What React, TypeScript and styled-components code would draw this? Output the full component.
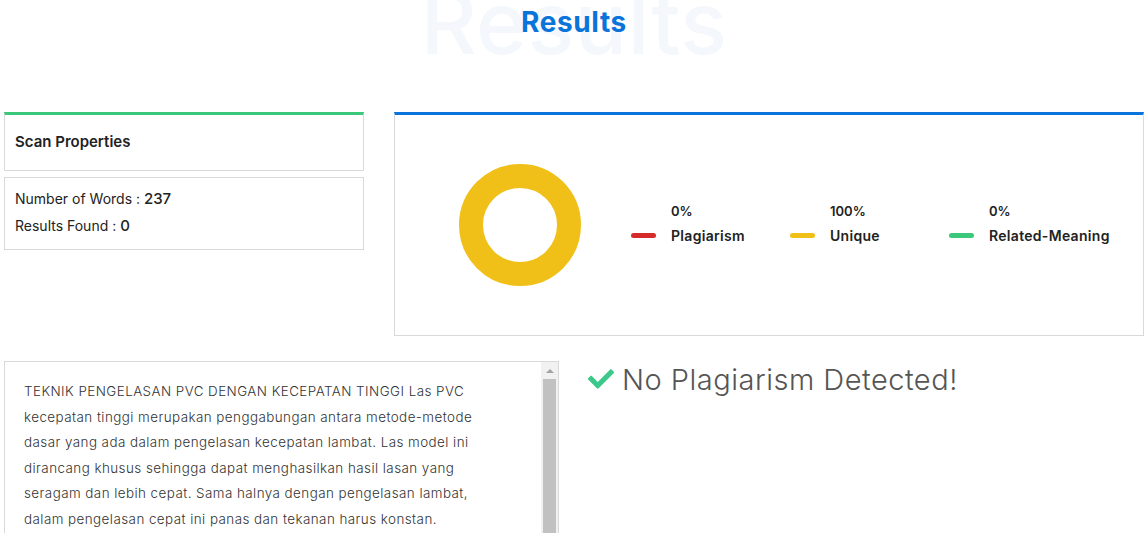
import styled, { createGlobalStyle } from "styled-components";
import { FaCheck } from "react-icons/fa";

const GlobalStyle = createGlobalStyle`
  html, body {
    margin: 0;
    padding: 0;
    background: #fff;
    font-family: Inter, "Open Sans", "Liberation Sans", sans-serif;
    color: #212529;
  }
`;

const Page = styled.div`
  padding: 0 4px;
  width: 1148px;
  box-sizing: border-box;
  overflow: hidden;
  height: 533px;
`;

const TitleWrap = styled.div`
  position: relative;
  height: 112px;
  text-align: center;
`;

const GhostTitle = styled.div`
  position: absolute;
  left: 0;
  right: 0;
  top: -29px;
  font-size: 87px;
  font-weight: 500;
  color: #f4f8fd;
  letter-spacing: 0.4px;
  line-height: 1.2;
  user-select: none;
`;

const Title = styled.h2`
  position: relative;
  margin: 0;
  padding-top: 4px;
  font-size: 28px;
  font-weight: 700;
  letter-spacing: 0.6px;
  color: #0a74da;
  line-height: 36px;
`;

const TopRow = styled.div`
  display: grid;
  grid-template-columns: 360px 750px;
  column-gap: 30px;
  align-items: start;
`;

const Panel = styled.div<{ accent?: string }>`
  border: 1px solid #d9d9d9;
  border-top: ${(p) => (p.accent ? `3px solid ${p.accent}` : "1px solid #d9d9d9")};
  background: #fff;
  box-sizing: border-box;
`;

const PropsHeader = styled(Panel)`
  height: 59px;
  display: flex;
  align-items: center;
  padding: 0 10px 2px;
  font-size: 15px;
  font-weight: 600;
  color: #222;
`;

const PropsBody = styled(Panel)`
  margin-top: 6px;
  padding: 10px 10px 13px;
  display: flex;
  flex-direction: column;
  gap: 6px;
`;

const PropLine = styled.div`
  font-size: 14px;
  color: #222;
  line-height: 21px;
`;

const PropValue = styled.span`
  font-size: 15px;
  font-weight: 500;
`;

const ChartPanel = styled(Panel)`
  height: 224px;
  display: flex;
  align-items: center;
  padding: 0 0 0 63px;
`;

const Legend = styled.div`
  display: flex;
  margin-left: 49px;
  margin-top: -4px;
`;

const LegendItem = styled.div`
  width: 159px;
  display: grid;
  grid-template-columns: 40px auto;
  row-gap: 8px;
  align-items: center;
`;

const Swatch = styled.span<{ color: string }>`
  grid-column: 1;
  grid-row: 2;
  width: 25px;
  height: 5px;
  border-radius: 3px;
  background: ${(p) => p.color};
`;

const Pct = styled.div`
  grid-column: 2;
  grid-row: 1;
  font-size: 13px;
  font-weight: 600;
  color: #222;
`;

const Label = styled.div`
  grid-column: 2;
  grid-row: 2;
  font-size: 14px;
  font-weight: 600;
  letter-spacing: 0.3px;
  color: #222;
  white-space: nowrap;
`;

const BottomRow = styled.div`
  display: flex;
  margin-top: 25px;
  gap: 29px;
`;

const TextBox = styled.div`
  width: 555px;
  height: 240px;
  box-sizing: border-box;
  border: 1px solid #d9d9d9;
  display: flex;
  overflow: hidden;
`;

const TextBody = styled.div`
  flex: 1;
  padding: 17px 10px 0 19px;
  font-size: 13.4px;
  letter-spacing: 0.45px;
  line-height: 25.6px;
  color: #333;
  font-weight: 300;
  white-space: nowrap;
  overflow: hidden;
`;

const ScrollTrack = styled.div`
  width: 17px;
  background: #f1f1f1;
  display: flex;
  flex-direction: column;
  align-items: center;
`;

const ScrollArrow = styled.div`
  height: 17px;
  display: flex;
  align-items: center;
  justify-content: center;

  &::before {
    content: "";
    border-left: 4px solid transparent;
    border-right: 4px solid transparent;
    border-bottom: 4px solid #a3a3a3;
  }
`;

const ScrollThumb = styled.div`
  width: 13px;
  flex: 1;
  background: #c1c1c1;
`;

const Verdict = styled.div`
  display: flex;
  align-items: center;
  gap: 8px;
  font-size: 29px;
  font-weight: 300;
  letter-spacing: 0.5px;
  color: #555;
  height: 36px;
  white-space: nowrap;

  svg {
    color: #3cc88a;
    font-size: 26px;
  }
`;

const Donut = () => (
  <svg width="124" height="124" viewBox="0 0 124 124">
    <circle cx="62" cy="62" r="49" fill="none" stroke="#f0c018" strokeWidth="24" />
  </svg>
);

const legend = [
  { pct: "0%", label: "Plagiarism", color: "#d62b2b" },
  { pct: "100%", label: "Unique", color: "#f0c018" },
  { pct: "0%", label: "Related-Meaning", color: "#3cc87a" },
];

const lines = [
  "TEKNIK PENGELASAN PVC DENGAN KECEPATAN TINGGI Las PVC",
  "kecepatan tinggi merupakan penggabungan antara metode-metode",
  "dasar yang ada dalam pengelasan kecepatan lambat. Las model ini",
  "dirancang khusus sehingga dapat menghasilkan hasil lasan yang",
  "seragam dan lebih cepat. Sama halnya dengan pengelasan lambat,",
  "dalam pengelasan cepat ini panas dan tekanan harus konstan.",
];

export default function App() {
  return (
    <Page>
      <GlobalStyle />
      <TitleWrap>
        <GhostTitle>Results</GhostTitle>
        <Title>Results</Title>
      </TitleWrap>
      <TopRow>
        <div>
          <PropsHeader accent="#3cc87a">Scan Properties</PropsHeader>
          <PropsBody>
            <PropLine>
              Number of Words : <PropValue>237</PropValue>
            </PropLine>
            <PropLine>
              Results Found : <PropValue>0</PropValue>
            </PropLine>
          </PropsBody>
        </div>
        <ChartPanel accent="#0a74da">
          <Donut />
          <Legend>
            {legend.map((l) => (
              <LegendItem key={l.label}>
                <Pct>{l.pct}</Pct>
                <Swatch color={l.color} />
                <Label>{l.label}</Label>
              </LegendItem>
            ))}
          </Legend>
        </ChartPanel>
      </TopRow>
      <BottomRow>
        <TextBox>
          <TextBody>
            {lines.map((line, i) => (
              <div key={i}>{line}</div>
            ))}
          </TextBody>
          <ScrollTrack>
            <ScrollArrow />
            <ScrollThumb />
          </ScrollTrack>
        </TextBox>
        <Verdict>
          <FaCheck />
          No Plagiarism Detected!
        </Verdict>
      </BottomRow>
    </Page>
  );
}
